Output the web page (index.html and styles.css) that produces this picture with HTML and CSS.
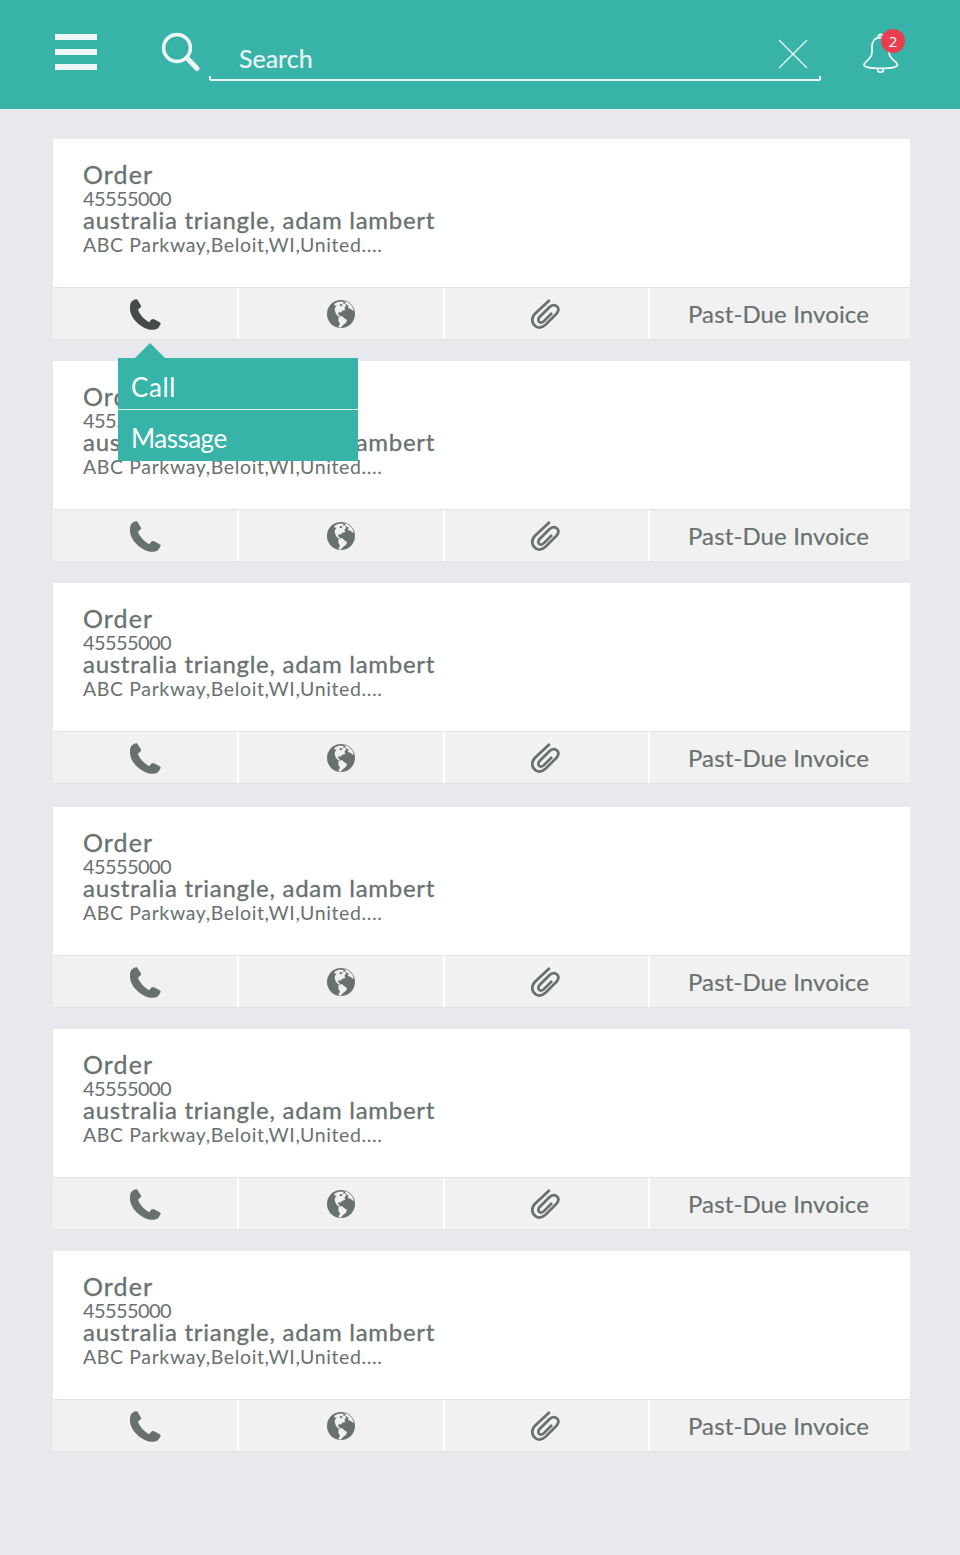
FILE: index.html
```html
<!DOCTYPE html>
<html lang="en">
<head>
<meta charset="utf-8">
<title>Orders</title>
<link rel="stylesheet" href="styles.css">
</head>
<body>
<svg class="defs" width="0" height="0">
  <symbol id="phone" viewBox="0 0 94 93">
    <path d="M5 7Q15-2 22 1L34 21Q34 25 24 32Q32 54 58 70Q64 60 70 60Q75 61 93 72Q94 77 85 88Q73 96 54 91C25 80-4 54 0 19Q1 11 5 7Z" fill="currentColor"/>
  </symbol>
  <symbol id="globe" viewBox="0 0 84 84">
    <circle cx="42" cy="42" r="42" fill="currentColor"/>
    <path d="M24 10L35 5L50 5L48 11L55 10L57 18L52 23L55 30L46 32L40 38L35 36L33 43L39 46L35 50L27 42L23 31L24 23L29 17L21 16Z" fill="#f1f1f1"/>
    <path d="M35 50L45 48L51 54L60 60L57 68L49 74L41 83L34 81L39 71L34 62Z" fill="#f1f1f1"/>
    <path d="M52 3L65 8L75 18L81 32L75 31L71 26L64 25L62 20L67 18L59 14Z" fill="#f1f1f1"/>
    <path d="M41 11L47 14L43 19L37 17Z" fill="currentColor"/>
  </symbol>
  <symbol id="clip" viewBox="0 0 88 92">
    <path d="M57 3L11 46C-2 60 3 77 14 84C25 91 36 86 44 79L78 45C87 35 84 25 77 21C69 16 61 20 55 26L26 55C20 62 22 68 26 71C31 74 36 71 40 67L64 43" fill="none" stroke="currentColor" stroke-width="8.4"/>
  </symbol>
</svg>

<header class="topbar">
  <div class="menu"><span></span><span></span><span></span></div>
  <svg class="lens" width="40" height="40" viewBox="0 0 40 40" fill="none" stroke="#eef5f6">
    <circle cx="16" cy="16" r="13.4" stroke-width="3.6"/>
    <path d="M26 26L36 36.500" stroke-width="5" stroke-linecap="round"/>
  </svg>
  <div class="search">
    <span class="search-text">Search</span>
    <svg class="clear" width="30" height="30" viewBox="0 0 30 30" stroke="#eef5f6" stroke-width="1.3"><path d="M1 1L29 29M29 1L1 29"/></svg>
  </div>
  <div class="bell">
    <svg width="36" height="40" viewBox="0 0 36 40" fill="none" stroke="#eef5f6" stroke-width="1.8">
      <path d="M15.200 5C15 2.500 16 1.500 17.500 1.500S20.500 2.500 20 5M17.500 4.500C11.500 4.500 9 9 9 13.500V19C9 27 1 28 1 32C1 36.500 34.500 36.500 34.500 32C34.500 28 26 27 26 19V13.500C26 9 23.500 4.500 17.500 4.500ZM14.500 36C14.500 40.500 20.500 40.500 20.500 36"/>
    </svg>
    <span class="badge">2</span>
  </div>
</header>

<main class="list">
  <article class="card">
    <div class="info"><p class="title">Order</p><p class="number">45555000</p><p class="name">australia triangle, adam lambert</p><p class="address">ABC Parkway,Beloit,WI,United....</p></div>
    <div class="actions">
      <div class="cell active"><svg class="phone"><use href="#phone"/></svg>
        <div class="popup"><div class="option">Call</div><div class="option tight">Massage</div></div>
      </div>
      <div class="cell"><svg class="globe"><use href="#globe"/></svg></div>
      <div class="cell"><svg class="clip"><use href="#clip"/></svg></div>
      <div class="cell"><span class="invoice">Past-Due Invoice</span></div>
    </div>
  </article>
  <article class="card">
    <div class="info"><p class="title">Order</p><p class="number">45555000</p><p class="name">australia triangle, adam lambert</p><p class="address">ABC Parkway,Beloit,WI,United....</p></div>
    <div class="actions">
      <div class="cell"><svg class="phone"><use href="#phone"/></svg></div>
      <div class="cell"><svg class="globe"><use href="#globe"/></svg></div>
      <div class="cell"><svg class="clip"><use href="#clip"/></svg></div>
      <div class="cell"><span class="invoice">Past-Due Invoice</span></div>
    </div>
  </article>
  <article class="card spaced">
    <div class="info"><p class="title">Order</p><p class="number">45555000</p><p class="name">australia triangle, adam lambert</p><p class="address">ABC Parkway,Beloit,WI,United....</p></div>
    <div class="actions">
      <div class="cell"><svg class="phone"><use href="#phone"/></svg></div>
      <div class="cell"><svg class="globe"><use href="#globe"/></svg></div>
      <div class="cell"><svg class="clip"><use href="#clip"/></svg></div>
      <div class="cell"><span class="invoice">Past-Due Invoice</span></div>
    </div>
  </article>
  <article class="card">
    <div class="info"><p class="title">Order</p><p class="number">45555000</p><p class="name">australia triangle, adam lambert</p><p class="address">ABC Parkway,Beloit,WI,United....</p></div>
    <div class="actions">
      <div class="cell"><svg class="phone"><use href="#phone"/></svg></div>
      <div class="cell"><svg class="globe"><use href="#globe"/></svg></div>
      <div class="cell"><svg class="clip"><use href="#clip"/></svg></div>
      <div class="cell"><span class="invoice">Past-Due Invoice</span></div>
    </div>
  </article>
  <article class="card">
    <div class="info"><p class="title">Order</p><p class="number">45555000</p><p class="name">australia triangle, adam lambert</p><p class="address">ABC Parkway,Beloit,WI,United....</p></div>
    <div class="actions">
      <div class="cell"><svg class="phone"><use href="#phone"/></svg></div>
      <div class="cell"><svg class="globe"><use href="#globe"/></svg></div>
      <div class="cell"><svg class="clip"><use href="#clip"/></svg></div>
      <div class="cell"><span class="invoice">Past-Due Invoice</span></div>
    </div>
  </article>
  <article class="card">
    <div class="info"><p class="title">Order</p><p class="number">45555000</p><p class="name">australia triangle, adam lambert</p><p class="address">ABC Parkway,Beloit,WI,United....</p></div>
    <div class="actions">
      <div class="cell"><svg class="phone"><use href="#phone"/></svg></div>
      <div class="cell"><svg class="globe"><use href="#globe"/></svg></div>
      <div class="cell"><svg class="clip"><use href="#clip"/></svg></div>
      <div class="cell"><span class="invoice">Past-Due Invoice</span></div>
    </div>
  </article>
</main>
</body>
</html>
```

FILE: styles.css
```css
* { box-sizing: border-box; }
body {
  margin: 0;
  min-height: 1555px;
  background: #e8e9ed;
  color: #69716f;
  font-family: Lato, "Open Sans", sans-serif;
  white-space: nowrap;
}
p { margin: 0; }
.defs { display: block; }

.topbar {
  display: flex;
  align-items: flex-start;
  height: 109px;
  padding: 0 55px;
  background: #37b3a8;
}
.menu { display: flex; flex-direction: column; gap: 9px; width: 42px; margin: 34px 64px 0 0; }
.menu span { height: 6px; background: #eef5f6; }
.lens { flex: none; margin: 32px 8px 0 0; }
.search {
  position: relative;
  display: flex;
  justify-content: space-between;
  width: 612px;
  height: 37px;
  margin: 44px 42px 0 0;
  padding: 0 13px 0 30px;
  border-bottom: 2px solid #eef5f6;
  border-radius: 0 0 2px 2px;
  color: #eef5f6;
}
.search::before, .search::after {
  content: "";
  position: absolute;
  bottom: -1px;
  width: 2px;
  height: 4px;
  background: #eef5f6;
}
.search::before { left: 0; }
.search::after { right: 0; }
.search-text { font-size: 25px; line-height: 28px; -webkit-text-stroke: 0.2px; }
.clear { flex: none; margin-top: -5px; }
.bell { position: relative; flex: none; width: 36px; margin-top: 33px; }
.bell svg { display: block; }
.badge {
  position: absolute;
  left: 18px;
  top: -4px;
  width: 24px;
  height: 24px;
  border-radius: 50%;
  background: #e83e50;
  color: #fff;
  font-family: "Open Sans", sans-serif;
  font-size: 15px;
  line-height: 25px;
  text-align: center;
}

.list { display: flex; flex-direction: column; gap: 22px; padding: 30px 50px 0 53px; }
.card { width: 857px; height: 200px; background: #fff; }
.spaced { margin-bottom: 2px; }
.info { height: 148px; padding: 24px 30px 0; }
.info p { line-height: 23px; }
.info .title { font-size: 25px; letter-spacing: 1.1px; -webkit-text-stroke: 0.3px; }
.info .number { font-size: 20px; letter-spacing: -0.6px; line-height: 24px; }
.info .name { font-size: 24px; letter-spacing: 0.72px; line-height: 20px; -webkit-text-stroke: 0.3px; }
.info .address { font-size: 19.5px; letter-spacing: 0.62px; line-height: 29px; }
.actions {
  display: grid;
  grid-template-columns: 184px 204px 203px 260px;
  column-gap: 2px;
  height: 53px;
  border-top: 1px solid #e2e3e4;
  border-bottom: 1px solid #e2e4e5;
}
.cell { position: relative; display: flex; align-items: center; justify-content: center; background: #f1f1f1; }
.phone { width: 31px; height: 31px; margin-top: 2px; }
.globe { width: 28px; height: 28px; }
.clip { width: 29px; height: 30px; margin-right: 2px; }
.active { color: #454b4a; }
.invoice { font-size: 24px; letter-spacing: 0.12px; margin-right: 3px; -webkit-text-stroke: 0.2px; }

.popup {
  position: absolute;
  z-index: 2;
  left: 65px;
  top: 70px;
  width: 240px;
  height: 103px;
  background: #37b3a8;
  color: #fff;
}
.popup::before {
  content: "";
  position: absolute;
  left: 17px;
  top: -15px;
  border: 15px solid transparent;
  border-top: 0;
  border-bottom-color: #37b3a8;
}
.option { height: 51px; padding: 13px 13px 0; font-size: 26px; line-height: 32px; letter-spacing: 0.6px; }
.option + .option { border-top: 1px solid #e6f5f3; padding-top: 12px; }
.tight { letter-spacing: -0.5px; }
```
